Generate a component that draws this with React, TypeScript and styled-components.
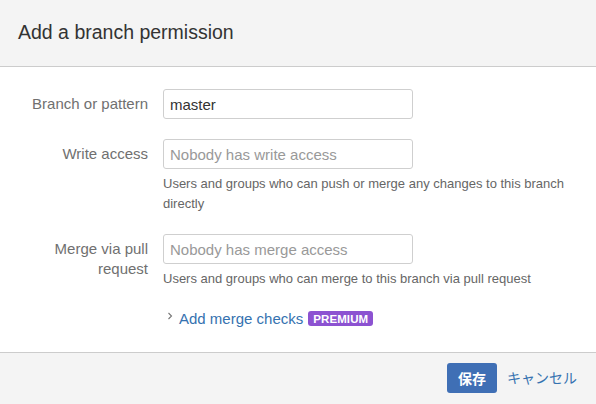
import React from 'react'
import styled, { createGlobalStyle } from 'styled-components'

const GlobalStyle = createGlobalStyle`
  html, body, #root {
    margin: 0;
    height: 100%;
  }
  body {
    font-family: 'Liberation Sans', Arial, 'Noto Sans CJK JP', sans-serif;
    background: #fff;
    color: #333;
  }
  * {
    box-sizing: border-box;
  }
`

const Dialog = styled.div`
  height: 100%;
  display: flex;
  flex-direction: column;
`

const Header = styled.header`
  height: 67px;
  flex: none;
  display: flex;
  align-items: center;
  padding: 0 18px 2px;
  background: #f4f4f4;
  border-bottom: 1px solid #cccccc;
`

const Title = styled.h2`
  margin: 0;
  font-size: 19.5px;
  font-weight: 400;
  color: #333;
`

const Body = styled.div`
  flex: 1;
  padding: 22px 18px 0;
`

const FieldRow = styled.div`
  display: grid;
  grid-template-columns: 130px 1fr;
  column-gap: 15px;
  margin-bottom: 20px;
`

const Label = styled.label`
  text-align: right;
  font-size: 15px;
  line-height: 20px;
  padding-top: 5px;
  color: #707070;
`

const Field = styled.div`
  display: flex;
  flex-direction: column;
`

const TextInput = styled.input`
  width: 250px;
  height: 30px;
  padding: 0 6px;
  border: 1px solid #cfcfcf;
  border-radius: 3px;
  font-family: inherit;
  font-size: 15px;
  color: #333;
  background: #fff;
  &::placeholder {
    color: #999;
  }
`

const Help = styled.div`
  margin-top: 5px;
  font-size: 13px;
  line-height: 20px;
  color: #666;
`

const MergeChecks = styled.div`
  display: flex;
  align-items: center;
  height: 20px;
  margin-left: 148px;
  margin-top: -1px;
`

const Chevron = styled.svg`
  width: 8px;
  height: 8px;
  margin-right: 5px;
  margin-top: -4px;
`

const LinkText = styled.a`
  color: #3572b0;
  font-size: 15px;
  text-decoration: none;
  cursor: pointer;
`

const Badge = styled.span`
  margin-left: 5px;
  padding: 2px 5px 1px;
  border-radius: 3px;
  background: #8c52d1;
  color: #fff;
  font-size: 11.5px;
  font-weight: 700;
  line-height: 12px;
  letter-spacing: 0.1px;
`

const Footer = styled.footer`
  height: 52px;
  flex: none;
  display: flex;
  justify-content: flex-end;
  align-items: flex-start;
  gap: 10px;
  padding: 10px 19px 0;
  background: #f4f4f4;
  border-top: 1px solid #cccccc;
`

const PrimaryButton = styled.button`
  height: 30px;
  padding: 0 11px;
  border: none;
  border-radius: 3px;
  background: #3f6fb5;
  color: #fff;
  font-family: inherit;
  font-size: 14px;
  font-weight: 700;
`

const CancelLink = styled(LinkText)`
  font-size: 14px;
  line-height: 30px;
`

export default function App() {
  return (
    <>
      <GlobalStyle />
      <Dialog>
        <Header>
          <Title>Add a branch permission</Title>
        </Header>
        <Body>
          <FieldRow>
            <Label>Branch or pattern</Label>
            <Field>
              <TextInput defaultValue="master" />
            </Field>
          </FieldRow>
          <FieldRow>
            <Label>Write access</Label>
            <Field>
              <TextInput placeholder="Nobody has write access" />
              <Help>
                Users and groups who can push or merge any changes to this branch
                directly
              </Help>
            </Field>
          </FieldRow>
          <FieldRow>
            <Label>Merge via pull request</Label>
            <Field>
              <TextInput placeholder="Nobody has merge access" />
              <Help>Users and groups who can merge to this branch via pull request</Help>
            </Field>
          </FieldRow>
          <MergeChecks>
            <Chevron viewBox="0 0 8 8">
              <path d="M2.5 1 L5.5 4 L2.5 7" fill="none" stroke="#777" strokeWidth="1.1" />
            </Chevron>
            <LinkText>Add merge checks</LinkText>
            <Badge>PREMIUM</Badge>
          </MergeChecks>
        </Body>
        <Footer>
          <PrimaryButton>保存</PrimaryButton>
          <CancelLink>キャンセル</CancelLink>
        </Footer>
      </Dialog>
    </>
  )
}
